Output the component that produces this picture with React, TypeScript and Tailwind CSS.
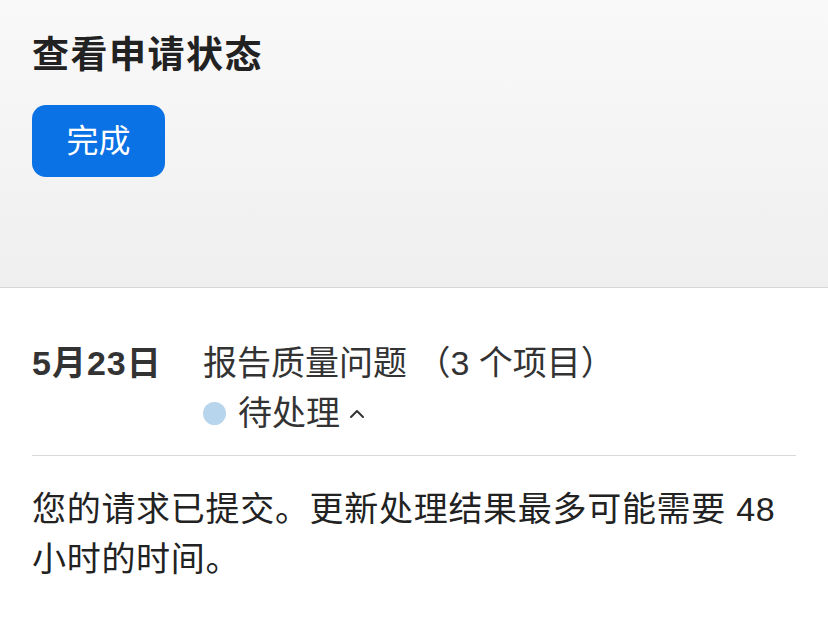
export default function App() {
  const font = { fontFamily: '"Liberation Sans", "Noto Sans CJK SC", sans-serif' };
  return (
    <div className="w-[828px] h-[622px] bg-white overflow-hidden text-[#222]" style={font}>
      <div className="h-[288px] bg-gradient-to-b from-[#f9f9fa] to-[#efeff0] border-b border-[#d6d6d8] px-[32px] pt-[32px]">
        <div className="text-[37px] leading-[48px] font-bold text-[#222] tracking-[1.5px]">查看申请状态</div>
        <button className="mt-[25px] w-[133px] h-[72px] rounded-[14px] bg-[#0a72e4] text-white text-[32px] leading-none flex items-center justify-center">
          完成
        </button>
      </div>
      <div className="px-[32px] pt-[50px]">
        <div className="flex">
          <div className="w-[171px] text-[34px] leading-[50px] font-bold text-[#333] tracking-[1px]">5月23日</div>
          <div className="flex flex-col">
            <div className="text-[34px] leading-[50px] text-[#333]">报告质量问题 （3 个项目）</div>
            <div className="flex items-center text-[34px] leading-[50px] text-[#333]">
              <span className="w-[23px] h-[23px] rounded-full bg-[#b7d5ed] mr-[12px]" />
              <span>待处理</span>
              <svg className="ml-[8px] mt-[2px]" width="18" height="12" viewBox="0 0 18 12" fill="none">
                <path d="M3 9 L9 3 L15 9" stroke="#333" strokeWidth="2" strokeLinecap="round" strokeLinejoin="round" />
              </svg>
            </div>
          </div>
        </div>
        <div className="mt-[17px] border-t border-[#d9d9d9]" />
        <div className="mt-[28px] text-[34px] leading-[50px] text-[#222] tracking-[0.7px]">
          您的请求已提交。更新处理结果最多可能需要 48 小时的时间。
        </div>
      </div>
    </div>
  );
}
